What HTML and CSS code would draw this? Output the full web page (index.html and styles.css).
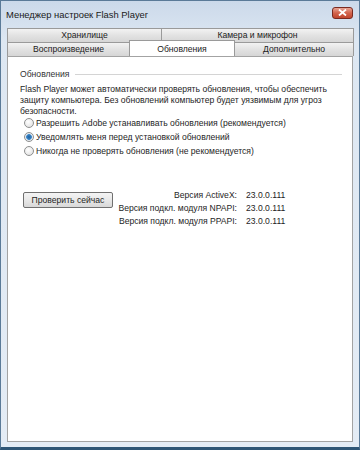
FILE: index.html
```html
<!DOCTYPE html>
<html lang="ru">
<head>
    <meta charset="utf-8">
    <title>Менеджер настроек Flash Player</title>
    <link rel="stylesheet" href="styles.css">
</head>
<body>
    <div class="window">
        <div class="titlebar">
            <span class="title">Менеджер настроек Flash Player</span>
            <button class="close" aria-label="Закрыть">
                <svg width="9" height="7" viewBox="0 0 9 7"><path d="M1 0.5 L8 6.5 M8 0.5 L1 6.5" stroke="#fff" stroke-width="1.8"/></svg>
            </button>
        </div>

        <div class="client">
            <div class="tabs">
                <div class="tab-row">
                    <div class="tab tab-storage">Хранилище</div>
                    <div class="tab tab-camera">Камера и микрофон</div>
                </div>
                <div class="tab-row">
                    <div class="tab tab-playback">Воспроизведение</div>
                    <div class="tab tab-updates active">Обновления</div>
                    <div class="tab tab-advanced">Дополнительно</div>
                </div>
            </div>

            <div class="panel">
                <div class="group-title">
                    <span>Обновления</span>
                    <div class="rule"></div>
                </div>
                <p class="desc">Flash Player может автоматически проверять обновления, чтобы обеспечить<br>защиту компьютера. Без обновлений компьютер будет уязвимым для угроз<br>безопасности.</p>

                <label class="option"><input type="radio" name="upd"> Разрешить Adobe устанавливать обновления (рекомендуется)</label>
                <label class="option"><input type="radio" name="upd" checked> Уведомлять меня перед установкой обновлений</label>
                <label class="option"><input type="radio" name="upd"> Никогда не проверять обновления (не рекомендуется)</label>

                <div class="check-row">
                    <button class="btn">Проверить сейчас</button>
                    <div class="versions">
                        <span class="v-label">Версия ActiveX:</span><span>23.0.0.111</span>
                        <span class="v-label">Версия подкл. модуля NPAPI:</span><span>23.0.0.111</span>
                        <span class="v-label">Версия подкл. модуля PPAPI:</span><span>23.0.0.111</span>
                    </div>
                </div>
            </div>
        </div>
    </div>
</body>
</html>
```

FILE: styles.css
```css
* {
    margin: 0;
    padding: 0;
    box-sizing: border-box;
}

body {
    width: 360px;
    height: 450px;
    overflow: hidden;
    font-family: 'Liberation Sans', Arial, sans-serif;
    font-size: 8.6px;
    color: #1e1e1e;
}

.window {
    width: 360px;
    height: 450px;
    background: linear-gradient(#cbd9ea, #dde7f2 40px, #e4ecf5);
    border: 1px solid #5a7a98;
    border-bottom: 3px solid #2f5676;
    display: flex;
    flex-direction: column;
}

.titlebar {
    height: 26px;
    display: flex;
    align-items: center;
    justify-content: space-between;
    padding: 0 6px 0 5px;
}

.title {
    font-size: 9.4px;
    color: #1a1a1a;
}

.close {
    width: 21px;
    height: 12px;
    margin-top: -3px;
    border: 1px solid #7a2a20;
    border-radius: 3px;
    background: linear-gradient(#e8a494, #d2634c 50%, #c0452e);
    display: flex;
    align-items: center;
    justify-content: center;
}

.client {
    flex: 1;
    padding: 1px 6px 5px 6px;
    display: flex;
    flex-direction: column;
}

.tab-row {
    display: flex;
    height: 14px;
}

.tab {
    height: 14px;
    line-height: 13px;
    text-align: center;
    background: linear-gradient(#f2f2f2, #e2e2e2 50%, #d6d6d6);
    border: 1px solid #9a9a9a;
    border-bottom: none;
    margin-right: -1px;
    color: #222;
}

.tab-storage { width: 155px; }
.tab-camera { flex: 1; }
.tab-playback { width: 123px; }
.tab-updates { width: 106px; }
.tab-advanced { flex: 1; }

.tab.active {
    background: #fff;
    height: 16px;
    margin-top: -2px;
    line-height: 17px;
    position: relative;
    z-index: 1;
    margin-bottom: -1px;
}

.panel {
    flex: 1;
    background: #fff;
    border: 1px solid #a3a3a3;
    padding: 12px 10px 0 12px;
}

.group-title {
    display: flex;
    align-items: center;
    gap: 5px;
    color: #333;
}

.rule {
    flex: 1;
    height: 1px;
    background: #d4d4d4;
    margin-top: 1px;
}

.desc {
    margin-top: 5px;
    line-height: 11px;
    margin-bottom: -1px;
}

.option {
    display: flex;
    align-items: center;
    height: 14px;
    padding-left: 4px;
    gap: 2px;
}

.option input {
    appearance: none;
    width: 10px;
    height: 10px;
    border-radius: 50%;
    border: 1px solid #8e8f8f;
    background: radial-gradient(circle at 40% 35%, #fff, #dcdcdc);
}

.option input:checked {
    background: radial-gradient(circle, #1d5f9c 0, #3b86c8 2.5px, #e8eef4 3.2px, #dcdcdc);
}

.check-row {
    display: flex;
    align-items: flex-start;
    margin-top: 31px;
}

.btn {
    width: 90px;
    height: 16px;
    margin-left: 3px;
    margin-top: 3px;
    font-family: inherit;
    font-size: 8.6px;
    color: #1e1e1e;
    border: 1px solid #707070;
    border-radius: 2px;
    background: linear-gradient(#f4f4f4, #e8e8e8 50%, #d8d8d8);
}

.versions {
    display: grid;
    grid-template-columns: 122px auto;
    column-gap: 9px;
    row-gap: 1px;
    line-height: 12px;
    margin-left: 2px;
}

.v-label {
    text-align: right;
}
```
